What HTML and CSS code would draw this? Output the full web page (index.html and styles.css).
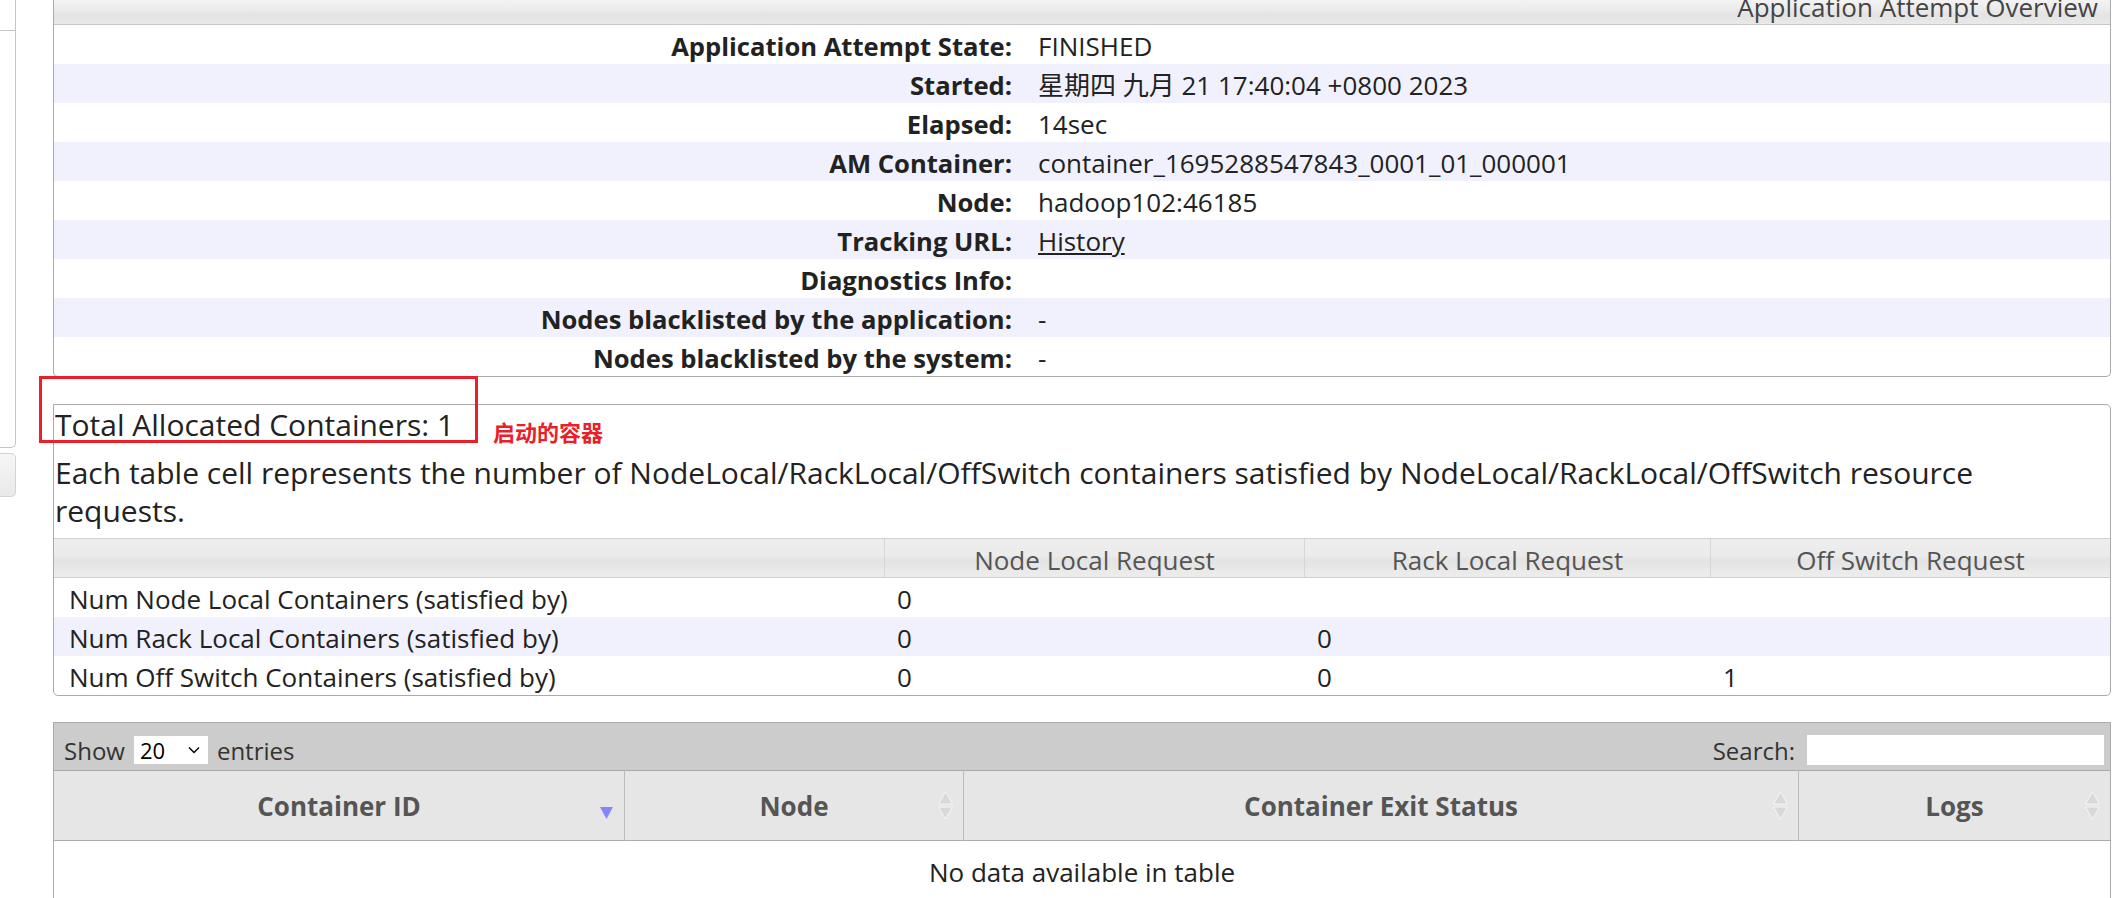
FILE: index.html
```html
<!DOCTYPE html>
<html lang="en">
<head>
<meta charset="utf-8">
<title>Application Attempt</title>
<link rel="stylesheet" href="styles.css">
</head>
<body>
<div class="page">
  <aside class="nav">
    <div class="nav-panel"><div class="nav-top"></div></div>
    <div class="nav-btn"></div>
  </aside>
  <main class="content">
    <section class="panel info">
      <div class="panel-head"><span class="panel-title">Application Attempt Overview</span></div>
      <table class="info-table">
        <tr><th>Application Attempt State:</th><td>FINISHED</td></tr>
        <tr><th>Started:</th><td>星期四 九月 21 17:40:04 +0800 2023</td></tr>
        <tr><th>Elapsed:</th><td>14sec</td></tr>
        <tr><th>AM Container:</th><td>container_1695288547843_0001_01_000001</td></tr>
        <tr><th>Node:</th><td>hadoop102:46185</td></tr>
        <tr><th>Tracking URL:</th><td><a class="link" href="#">History</a></td></tr>
        <tr><th>Diagnostics Info:</th><td></td></tr>
        <tr><th>Nodes blacklisted by the application:</th><td>-</td></tr>
        <tr><th>Nodes blacklisted by the system:</th><td>-</td></tr>
      </table>
    </section>

    <section class="panel alloc">
      <div class="alloc-title">Total Allocated Containers: 1</div>
      <p class="alloc-desc">Each table cell represents the number of NodeLocal/RackLocal/OffSwitch containers satisfied by NodeLocal/RackLocal/OffSwitch resource requests.</p>
      <table class="alloc-table">
        <colgroup><col class="ac1"><col class="ac2"><col class="ac3"><col class="ac4"></colgroup>
        <thead>
          <tr><th></th><th>Node Local Request</th><th>Rack Local Request</th><th>Off Switch Request</th></tr>
        </thead>
        <tbody>
          <tr><td class="lbl">Num Node Local Containers (satisfied by)</td><td>0</td><td></td><td></td></tr>
          <tr><td class="lbl">Num Rack Local Containers (satisfied by)</td><td>0</td><td>0</td><td></td></tr>
          <tr><td class="lbl">Num Off Switch Containers (satisfied by)</td><td>0</td><td>0</td><td>1</td></tr>
        </tbody>
      </table>
    </section>

    <section class="dt">
      <div class="dt-toolbar">
        <div class="dt-length">Show <span class="dt-select"><span>20</span><svg class="chev" width="12" height="8" viewBox="0 0 12 8"><polyline points="1,1.5 6,6.5 11,1.5" fill="none" stroke="#000" stroke-width="1.4"/></svg></span> entries</div>
        <div class="dt-search">Search: <span class="dt-input"></span></div>
      </div>
      <table class="dt-table">
        <colgroup><col class="dc1"><col class="dc2"><col class="dc3"><col class="dc4"></colgroup>
        <thead>
          <tr>
            <th>Container ID<svg class="sort sort-desc" width="13" height="12" viewBox="0 0 13 12"><polygon points="0,0 13,0 6.5,12" fill="#8585ff"/></svg></th>
            <th>Node<svg class="sort sort-both" width="15" height="29" viewBox="0 0 15 29"><polygon points="0.5,13 7.5,0.8 14.5,13" fill="#d9d9d9" stroke="#f5f5f5"/><polygon points="0.5,16 7.5,28.2 14.5,16" fill="#d9d9d9" stroke="#f5f5f5"/></svg></th>
            <th>Container Exit Status<svg class="sort sort-both" width="15" height="29" viewBox="0 0 15 29"><polygon points="0.5,13 7.5,0.8 14.5,13" fill="#d9d9d9" stroke="#f5f5f5"/><polygon points="0.5,16 7.5,28.2 14.5,16" fill="#d9d9d9" stroke="#f5f5f5"/></svg></th>
            <th>Logs<svg class="sort sort-both" width="15" height="29" viewBox="0 0 15 29"><polygon points="0.5,13 7.5,0.8 14.5,13" fill="#d9d9d9" stroke="#f5f5f5"/><polygon points="0.5,16 7.5,28.2 14.5,16" fill="#d9d9d9" stroke="#f5f5f5"/></svg></th>
          </tr>
        </thead>
        <tbody>
          <tr><td class="empty" colspan="4">No data available in table</td></tr>
        </tbody>
      </table>
    </section>
  </main>
  <div class="annot-box"></div>
  <div class="annot-text">启动的容器</div>
</div>
</body>
</html>
```
FILE: styles.css
```css
* { box-sizing: border-box; }
html, body { margin: 0; padding: 0; background: #fff; }
body {
  font-family: "Open Sans", "Noto Sans CJK SC", sans-serif;
  color: #222;
  overflow: hidden;
}
.page {
  position: relative;
  display: flex;
  align-items: flex-start;
  height: 898px;
  padding-right: 2px;
}
.nav { width: 16px; flex: none; display: flex; flex-direction: column; }
.nav-panel {
  height: 448px;
  border-right: 1px solid #c5c5c5;
  border-bottom: 1px solid #c5c5c5;
  border-bottom-right-radius: 5px;
}
.nav-top { height: 31px; border-bottom: 1px solid #c5c5c5; }
.nav-btn {
  margin-top: 5px;
  height: 44px;
  border: 1px solid #d3d3d3;
  border-left: none;
  border-radius: 0 5px 5px 0;
  background: linear-gradient(#f6f6f6, #e9e9e9);
}
.content { flex: 1; margin-left: 37px; min-width: 0; }

.panel { border: 1px solid #aaa; border-radius: 0 0 5px 5px; }
.info { border-top: none; }
.panel-head {
  height: 25px;
  border-bottom: 1px solid #c8c8c8;
  background: linear-gradient(#f3f3f3, #ececec 35%, #e3e3e3 65%, #e9e9e9);
  overflow: hidden;
  display: flex;
  justify-content: flex-end;
  align-items: flex-end;
  padding-right: 12px;
}
.panel-title { font-size: 26px; line-height: 26px; color: #444; padding-bottom: 4px; white-space: nowrap; }

.info-table { width: 100%; border-collapse: collapse; table-layout: fixed; }
.info-table tr { height: 39px; }
.info-table tr:nth-child(even) { background: #f0f1fc; }
.info-table th, .info-table td { height: 39px; line-height: 35px; white-space: nowrap; }
.info-table th {
  width: 971px;
  text-align: right;
  padding: 4px 13px 0 0;
  font-weight: bold;
  font-size: 25.6px;
}
.info-table td { padding: 4px 0 0 13px; font-size: 26px; }
.link { color: #222; text-decoration: underline; }

.alloc { margin-top: 27px; border-radius: 0 5px 5px 5px; }
.alloc-title { font-size: 30px; line-height: 39px; padding-left: 1px; }
.alloc-desc { font-size: 30px; line-height: 38px; margin: 10px 0 8px; padding-left: 1px; }
.alloc-table { width: 100%; border-collapse: separate; border-spacing: 0; table-layout: fixed; }
.ac1 { width: 830px; }
.ac2 { width: 420px; }
.ac3 { width: 406px; }
.alloc-table thead tr { height: 40px; }
.alloc-table th {
  height: 40px;
  padding: 4px 0 0;
  line-height: 34px;
  font-weight: normal;
  font-size: 26px;
  color: #555;
  text-align: center;
  border-top: 1px solid #cfcfcf;
  border-bottom: 1px solid #cfcfcf;
  border-left: 1px solid #d6d6d6;
  background: linear-gradient(#eeeeee, #ebebeb 45%, #e3e3e3 55%, #ededed);
  white-space: nowrap;
}
.alloc-table th:first-child { border-left: none; }
.alloc-table tbody tr { height: 39px; }
.alloc-table tbody tr:nth-child(2) { background: #f0f1fc; }
.alloc-table td { height: 39px; padding: 4px 0 0 13px; line-height: 35px; font-size: 26px; white-space: nowrap; }
.alloc-table td.lbl { padding-left: 15px; }

.dt { margin-top: 26px; border-left: 1px solid #aaa; border-right: 1px solid #aaa; }
.dt-toolbar {
  height: 48px;
  border-top: 1px solid #aaa;
  background: #ccc;
  display: flex;
  align-items: center;
  justify-content: space-between;
  padding: 7px 6px 0 10px;
  font-size: 24px;
  color: #333;
}
.dt-length, .dt-search { display: flex; align-items: center; gap: 9px; white-space: nowrap; }
.dt-select {
  display: inline-flex;
  align-items: center;
  justify-content: space-between;
  width: 74px;
  height: 28px;
  background: #fff;
  padding: 0 8px 0 6px;
  font-size: 22px;
  color: #000;
}
.dt-input { display: inline-block; width: 297px; height: 30px; background: #fff; }
.dt-search { gap: 12px; }

.dt-table { width: 100%; border-collapse: separate; border-spacing: 0; table-layout: fixed; }
.dc1 { width: 570px; }
.dc2 { width: 339px; }
.dc3 { width: 835px; }
.dt-table thead tr { height: 71px; }
.dt-table th {
  position: relative;
  height: 71px;
  padding: 0;
  background: #e6e6e6;
  border-top: 1px solid #aaa;
  border-bottom: 1px solid #aaa;
  border-left: 1px solid #bbb;
  font-size: 26px;
  font-weight: bold;
  color: #555;
  text-align: center;
  white-space: nowrap;
}
.dt-table th:first-child { border-left: none; }
.sort { position: absolute; right: 10px; top: 50%; }
.sort-desc { margin-top: 1px; right: 11px; }
.sort-both { margin-top: -15px; }
.dt-table td.empty {
  text-align: center;
  font-size: 26px;
  line-height: 39px;
  padding: 12px 0 20px;
}

.annot-box {
  position: absolute;
  left: 39px;
  top: 376px;
  width: 439px;
  height: 67px;
  border: 3px solid #e8202a;
}
.annot-text {
  position: absolute;
  left: 493px;
  top: 417px;
  font-family: "Noto Sans CJK SC", sans-serif;
  font-weight: bold;
  font-size: 22px;
  line-height: 28px;
  color: #e8202a;
}
```
